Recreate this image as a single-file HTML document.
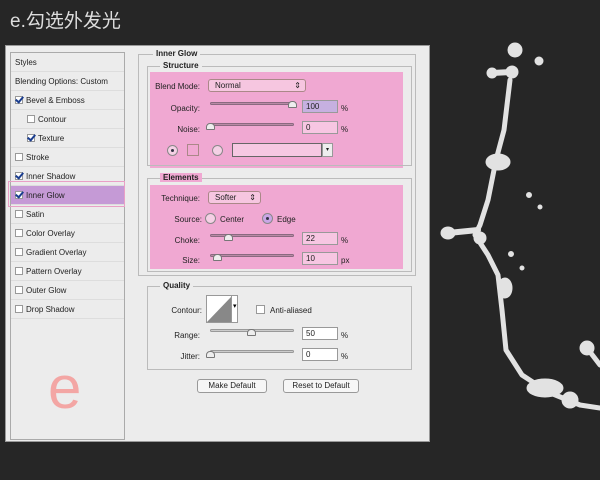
<!DOCTYPE html>
<html><head><meta charset="utf-8"><style>
*{margin:0;padding:0;box-sizing:border-box}
body{width:600px;height:480px;background:#262626;position:relative;overflow:hidden;font-family:"Liberation Sans",sans-serif;font-size:8px;color:#222}
.abs{position:absolute}
.title{left:10px;top:6px;color:#ddd;font-size:19px;font-family:"Liberation Sans","Noto Sans CJK SC",sans-serif}
.dlg{left:5px;top:45px;width:425px;height:397px;background:#ececec;border:1px solid #999}
.list{left:10px;top:52px;width:115px;height:388px;border:1px solid #aaa;background:#ececec}
.it{position:absolute;left:0;width:113px;height:19px;border-bottom:1px solid #ddd;line-height:19px;padding-left:4px;font-size:8px}
.cb{display:inline-block;width:8px;height:8px;border:1px solid #999;background:#fff;vertical-align:-1px;margin-right:3px;position:relative}
.cb.on::after{content:"";position:absolute;left:1px;top:-2px;width:3px;height:6px;border:solid #1a3d8f;border-width:0 2px 2px 0;transform:rotate(40deg)}
.grp{border:1px solid #bbb}
.lbl{position:absolute;font-size:8px;text-align:right}
.pink{background:#f0a8d2}
.slider{position:absolute;height:3px;background:#b98aa6;border:1px solid #8a6a80;border-radius:2px}
.thumb{position:absolute;width:9px;height:7px;border:1px solid #777;background:#eee;border-radius:4px 4px 1px 1px}
.inp{position:absolute;height:13px;border:1px solid #999;background:#f7c6e2;font-size:8px;padding-left:3px;line-height:11px}
.btn{position:absolute;height:14px;border:1px solid #999;border-radius:3px;background:#f6f6f6;font-size:8px;text-align:center;line-height:12px}
.sel{position:absolute;height:13px;border:1px solid #a88;border-radius:3px;background:#f6c6e0;font-size:8px;padding-left:6px;line-height:11px}
.rad{position:absolute;width:11px;height:11px;border:1px solid #888;border-radius:50%;background:#f5d0e5}
.rad.on::after{content:"";position:absolute;left:3px;top:3px;width:3px;height:3px;background:#334;border-radius:50%}
</style></head><body>
<div class="abs title">e.勾选外发光</div>
<svg class="abs" style="left:430px;top:20px" width="170" height="460">
<g fill="#e2e2e2" stroke="#e2e2e2" stroke-linecap="round" stroke-linejoin="round">
<path d="M80 60 L74 110 L66 140 L58 180 L50 205 L45 215 L58 235 L68 255 L72 290 L76 330 L92 355 L118 372 L150 385 L170 388" fill="none" stroke-width="5"/>
<circle cx="85" cy="30" r="7"/><circle cx="62" cy="53" r="5"/><circle cx="82" cy="52" r="6"/><path d="M62 53 L82 52" stroke-width="6"/>
<ellipse cx="68" cy="142" rx="12" ry="8"/><ellipse cx="18" cy="213" rx="7" ry="6"/><path d="M18 213 L48 210" stroke-width="6"/>
<circle cx="50" cy="218" r="6"/><ellipse cx="75" cy="268" rx="7" ry="10"/><ellipse cx="115" cy="368" rx="18" ry="9"/><circle cx="140" cy="380" r="8"/>
<circle cx="157" cy="328" r="7"/><path d="M157 328 L170 345" stroke-width="5"/>
<circle cx="109" cy="41" r="4"/><circle cx="99" cy="175" r="2.5"/><circle cx="110" cy="187" r="2"/><circle cx="81" cy="234" r="2.5"/><circle cx="92" cy="248" r="2"/>
</g></svg>
<div class="abs dlg"></div>
<div class="abs list">
<div class="it" style="top:0">Styles</div>
<div class="it" style="top:19px">Blending Options: Custom</div>
<div class="it" style="top:38px"><span class="cb on"></span>Bevel &amp; Emboss</div>
<div class="it" style="top:57px;padding-left:16px"><span class="cb"></span>Contour</div>
<div class="it" style="top:76px;padding-left:16px"><span class="cb on"></span>Texture</div>
<div class="it" style="top:95px"><span class="cb"></span>Stroke</div>
<div class="it" style="top:114px"><span class="cb on"></span>Inner Shadow</div>
<div class="it" style="top:133px;background:#c59ad6"><span class="cb on"></span>Inner Glow</div>
<div class="it" style="top:152px"><span class="cb"></span>Satin</div>
<div class="it" style="top:171px"><span class="cb"></span>Color Overlay</div>
<div class="it" style="top:190px"><span class="cb"></span>Gradient Overlay</div>
<div class="it" style="top:209px"><span class="cb"></span>Pattern Overlay</div>
<div class="it" style="top:228px"><span class="cb"></span>Outer Glow</div>
<div class="it" style="top:247px"><span class="cb"></span>Drop Shadow</div>
</div>
<div class="abs" style="left:8px;top:181px;width:117px;height:26px;border:1px solid #e9a0c6"></div>
<div class="abs" style="left:48px;top:358px;font-size:60px;color:#f3a6a4;line-height:60px">e</div>
<div class="abs grp" style="left:138px;top:54px;width:278px;height:222px"></div>
<div class="abs" style="left:153px;top:49px;background:#ececec;padding:0 3px;font-weight:bold">Inner Glow</div>
<div class="abs pink" style="left:150px;top:72px;width:253px;height:96px"></div>
<div class="abs grp" style="left:147px;top:66px;width:265px;height:100px"></div>
<div class="abs" style="left:160px;top:61px;background:#ececec;padding:0 3px;font-weight:bold">Structure</div>
<div class="lbl" style="left:150px;top:82px;width:50px">Blend Mode:</div>
<div class="sel" style="left:208px;top:79px;width:98px">Normal<span style="position:absolute;right:4px">⇕</span></div>
<div class="lbl" style="left:150px;top:104px;width:50px">Opacity:</div>
<div class="slider" style="left:210px;top:102px;width:84px"></div><div class="thumb" style="left:288px;top:101px"></div>
<div class="inp" style="left:302px;top:100px;width:36px;background:#c6b0e0">100</div><div class="abs" style="left:341px;top:104px">%</div>
<div class="lbl" style="left:150px;top:125px;width:50px">Noise:</div>
<div class="slider" style="left:210px;top:123px;width:84px"></div><div class="thumb" style="left:206px;top:123px"></div>
<div class="inp" style="left:302px;top:121px;width:36px">0</div><div class="abs" style="left:341px;top:125px">%</div>
<div class="rad on" style="left:167px;top:145px"></div>
<div class="abs" style="left:187px;top:144px;width:12px;height:12px;border:1px solid #a88"></div>
<div class="rad" style="left:212px;top:145px"></div>
<div class="abs" style="left:232px;top:143px;width:90px;height:14px;border:1px solid #666;background:#f6c8e2"></div>
<div class="abs" style="left:322px;top:143px;width:11px;height:14px;border:1px solid #999;background:#eee;font-size:6px;text-align:center;line-height:12px">▾</div>
<div class="abs pink" style="left:150px;top:185px;width:253px;height:84px"></div>
<div class="abs grp" style="left:147px;top:178px;width:265px;height:94px"></div>
<div class="abs" style="left:160px;top:173px;padding:0 3px;font-weight:bold;background:#f0a8d2">Elements</div>
<div class="lbl" style="left:150px;top:194px;width:50px">Technique:</div>
<div class="sel" style="left:208px;top:191px;width:53px">Softer<span style="position:absolute;right:4px">⇕</span></div>
<div class="lbl" style="left:150px;top:215px;width:52px">Source:</div>
<div class="rad" style="left:205px;top:213px"></div><div class="abs" style="left:220px;top:215px">Center</div>
<div class="rad on" style="left:262px;top:213px;background:#c9a6e6"></div><div class="abs" style="left:277px;top:215px">Edge</div>
<div class="lbl" style="left:150px;top:236px;width:50px">Choke:</div>
<div class="slider" style="left:210px;top:234px;width:84px"></div><div class="thumb" style="left:224px;top:234px"></div>
<div class="inp" style="left:302px;top:232px;width:36px">22</div><div class="abs" style="left:341px;top:236px">%</div>
<div class="lbl" style="left:150px;top:256px;width:50px">Size:</div>
<div class="slider" style="left:210px;top:254px;width:84px"></div><div class="thumb" style="left:213px;top:254px"></div>
<div class="inp" style="left:302px;top:252px;width:36px">10</div><div class="abs" style="left:341px;top:256px">px</div>
<div class="abs grp" style="left:147px;top:286px;width:265px;height:84px"></div>
<div class="abs" style="left:160px;top:281px;background:#ececec;padding:0 3px;font-weight:bold">Quality</div>
<div class="lbl" style="left:150px;top:306px;width:52px">Contour:</div>
<svg class="abs" style="left:206px;top:295px" width="32" height="28"><rect x="0.5" y="0.5" width="31" height="27" fill="#fff" stroke="#999"/><path d="M1 27 L25 2 L25 27Z" fill="#888"/><line x1="25.5" y1="1" x2="25.5" y2="27" stroke="#999"/><text x="27" y="13" font-size="7" font-family="Liberation Sans">▾</text></svg>
<span class="cb abs" style="left:256px;top:305px;width:9px;height:9px"></span><div class="abs" style="left:270px;top:306px">Anti-aliased</div>
<div class="lbl" style="left:150px;top:331px;width:50px">Range:</div>
<div class="slider" style="left:210px;top:329px;width:84px;background:#ccc;border-color:#999"></div><div class="thumb" style="left:247px;top:329px"></div>
<div class="inp" style="left:302px;top:327px;width:36px;background:#fff">50</div><div class="abs" style="left:341px;top:331px">%</div>
<div class="lbl" style="left:150px;top:352px;width:50px">Jitter:</div>
<div class="slider" style="left:210px;top:350px;width:84px;background:#ccc;border-color:#999"></div><div class="thumb" style="left:206px;top:351px"></div>
<div class="inp" style="left:302px;top:348px;width:36px;background:#fff">0</div><div class="abs" style="left:341px;top:352px">%</div>
<div class="btn" style="left:197px;top:379px;width:70px">Make Default</div>
<div class="btn" style="left:283px;top:379px;width:76px">Reset to Default</div>
</body></html>
